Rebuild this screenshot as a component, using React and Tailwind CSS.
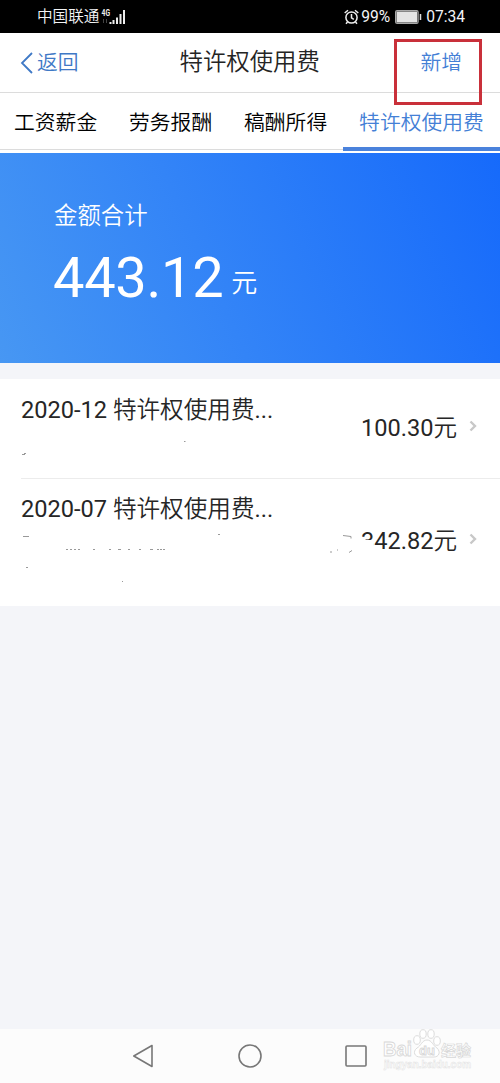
import React from "react";

const TABS = ["工资薪金", "劳务报酬", "稿酬所得", "特许权使用费"];

function StatusBar() {
  return (
    <div className="flex h-[33px] items-center bg-black pt-px pl-[37px] pr-[35px] text-[15.6px] text-gray-100">
      <span className="pt-[2px] leading-none font-[350]">中国联通</span>
      <svg className="ml-[2px]" width="26" height="20" viewBox="0 0 26 20">
        <text x="0.5" y="9" fontSize="9" fontWeight="700" fill="#eee" textLength="8.5" lengthAdjust="spacingAndGlyphs">4G</text>
        <path d="M2.5 12v4M5.5 12v4" stroke="#444" strokeWidth="1" />
        <path d="M9.5 15v2M12.5 13v4M16 10.5v6.5M19.5 7v10M23 3v14" stroke="#eee" strokeWidth="2" />
      </svg>
      <div className="ml-auto flex items-center">
        <svg width="15" height="16" viewBox="0 0 15 16" fill="none" stroke="#eee" strokeWidth="1.5">
          <circle cx="7.5" cy="8.5" r="5.6" />
          <path d="M7.5 5v3.8l2.3 1.5M0.7 4L4 1.2M14.3 4L11 1.2M3.5 13l-1.5 1.8M11.5 13l1.5 1.8" />
        </svg>
        <span className="ml-[2px] pt-[2px] leading-none">99%</span>
        <svg className="ml-[5px]" width="27" height="14" viewBox="0 0 27 14">
          <rect x="0.6" y="0.6" width="22.5" height="12.8" rx="1.5" fill="none" stroke="#aaa" strokeWidth="1.2" />
          <rect x="1.5" y="1.5" width="20.7" height="11" fill="#e4e4e4" />
          <path d="M25.5 4v6" stroke="#ddd" strokeWidth="1.5" />
        </svg>
        <span className="ml-[4px] pt-[2px] leading-none">07:34</span>
      </div>
    </div>
  );
}

function Header() {
  return (
    <div className="flex h-[60px] items-center justify-between border-b border-[#dcdcdc] bg-white pl-5 pr-[38px]">
      <button className="flex w-[62px] items-center text-[20.8px] leading-none font-[350] text-[#3f79c6]">
        <svg width="13" height="22" viewBox="0 0 13 22" fill="none" stroke="currentColor" strokeWidth="1.8">
          <path d="M12 1L2 11l10 10" />
        </svg>
        <span className="ml-[4px] pt-px whitespace-nowrap">返回</span>
      </button>
      <h1 className="pt-px pr-[3px] text-[23.4px] leading-none font-[350] whitespace-nowrap text-[#242424]">特许权使用费</h1>
      <button className="relative pt-px text-[20.8px] leading-none font-[350] text-[#4480d6]">
        新增
        <span className="absolute -top-[13px] -left-[26px] h-[66px] w-[88px] border-[3px] border-[#c9303a]" />
      </button>
    </div>
  );
}

function Tabs() {
  return (
    <div className="flex h-[60px] bg-white text-[20.8px] leading-none font-[350] text-black">
      {TABS.map((tab, i) => (
        <div
          key={tab}
          className={
            i === 3
              ? "-ml-[2px] flex h-[58px] flex-1 items-center justify-center border-b-4 border-[#4a82dc] pt-[6px] whitespace-nowrap text-[#4480d6]"
              : "flex h-[57px] w-[115px] items-center border-b border-[#dcdcdc] pt-[4px] pl-[14px] whitespace-nowrap"
          }
        >
          {tab}
        </div>
      ))}
    </div>
  );
}

function Summary() {
  return (
    <div className="h-[210px] bg-[linear-gradient(66deg,#4797f3_0%,#3384f7_42%,#166afb_100%)] pt-[50px] pl-[54px] text-white">
      <div className="text-[23.4px] leading-[26px] font-[350]">金额合计</div>
      <div className="mt-[16px] flex items-baseline">
        <span className="-ml-px text-[56px] leading-[66px] tracking-[-0.3px]">443.12</span>
        <span className="relative -top-[5px] ml-[8px] text-[26px] leading-none font-[350]">元</span>
      </div>
    </div>
  );
}

function Chevron() {
  return (
    <svg className="mb-[6px] ml-[12px]" width="10" height="12" viewBox="0 0 10 12" fill="none" stroke="#c8c8c8" strokeWidth="2.4">
      <path d="M1.5 1.5l4.5 4.5-4.5 4.5" />
    </svg>
  );
}

// leftovers of the blanked-out company names
function Residue({ d }) {
  return (
    <svg className="absolute top-0 left-0" width="360" height="128" fill="none" stroke="#999" strokeWidth="1">
      <path d={d} />
    </svg>
  );
}

function Records() {
  return (
    <div className="mt-4 h-[227px] bg-white text-[23.6px] text-[#262626]">
      <div className="relative flex h-[99px] pr-[21px] pl-[21px]">
        <Residue d="M22 75.5h3M24 74.5h2M184 62.5h1.5" />
        <span className="pt-[18px] leading-[26px]">
          2020-12 <span className="font-[350]">特许权使用费</span>...
        </span>
        <span className="ml-auto flex h-[100px] items-center leading-none">
          100.30<span className="font-[350]">元</span><Chevron />
        </span>
      </div>
      <div className="relative flex h-[128px] pr-[21px] pl-[21px]">
        <span className="absolute top-0 right-0 left-[21px] border-t border-[#ececec]" />
        <Residue d="M23 58.5h6M218 56.5h2M66 71.5h2m2 0h2m2 0h2m2 0h2M93 71.5h2M109 71.5h2m7 0h3m7 0h2m9 0h2m9 0h3m4 0h2m1 0h2m1 0h2M26 89.5h2M122 103.5h1M330 74h2M337 72h1M343 57.5l8 1v2M349 74.5l3-2" />
        <span className="pt-[18px] leading-[26px]">
          2020-07 <span className="font-[350]">特许权使用费</span>...
        </span>
        <span className="relative ml-auto flex h-[128px] items-center leading-none">
          342.82<span className="font-[350]">元</span>
          <span className="absolute top-[62px] left-0 h-[14px] w-[12px] bg-white" />
          <Chevron />
        </span>
      </div>
    </div>
  );
}

function Watermark() {
  return (
    <svg className="absolute top-0 left-[380px]" width="95" height="54" fill="#fff" stroke="#d8d8d8" strokeWidth="0.9" fontFamily="Liberation Sans" fontWeight="700">
      <text x="3" y="27" fontSize="20" textLength="29" lengthAdjust="spacingAndGlyphs">Bai</text>
      <ellipse cx="37" cy="11" rx="3.3" ry="4.3" />
      <ellipse cx="43" cy="5" rx="3.2" ry="4.3" />
      <ellipse cx="51" cy="5" rx="3.2" ry="4.3" />
      <ellipse cx="57" cy="12" rx="3.3" ry="4.3" />
      <path d="M47 11c-5 0-6 6-10 8-5 4-2 9 3 9h14c5 0 7-5 3-9-4-2-5-8-10-8z" />
      <text x="39" y="26" fontSize="13">du</text>
      <text x="61" y="27" fontSize="15" strokeWidth="0.7" fontFamily="Noto Sans CJK SC">经验</text>
      <text x="4" y="39" fontSize="10.5" stroke="#e2e2e2" strokeWidth="0.5" textLength="87" lengthAdjust="spacingAndGlyphs">jingyan.baidu.com</text>
    </svg>
  );
}

function NavBar() {
  return (
    <div className="relative mt-auto flex h-[54px] items-center justify-center gap-[82px] bg-[#fcfcfc]">
      <svg width="22" height="26" viewBox="0 0 22 26" fill="none" stroke="#777" strokeWidth="1.6" strokeLinejoin="round">
        <path d="M0.8 13L19 2.5v21z" />
      </svg>
      <svg width="26" height="26" viewBox="0 0 26 26" fill="none" stroke="#777" strokeWidth="1.6">
        <circle cx="13" cy="13" r="11" />
      </svg>
      <svg width="22" height="26" viewBox="0 0 22 26" fill="none" stroke="#777" strokeWidth="1.6">
        <rect x="1" y="3" width="20" height="20" rx="1" />
      </svg>
      <Watermark />
    </div>
  );
}

export default function App() {
  return (
    <div className="flex h-[1083px] w-[500px] flex-col overflow-hidden bg-[#f4f5f9] font-[Roboto,'Noto_Sans_CJK_SC',sans-serif]">
      <StatusBar />
      <Header />
      <Tabs />
      <Summary />
      <Records />
      <NavBar />
    </div>
  );
}
